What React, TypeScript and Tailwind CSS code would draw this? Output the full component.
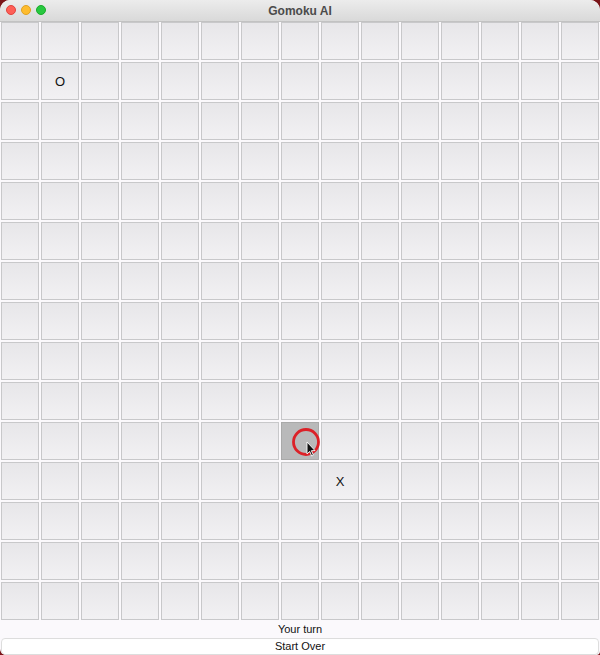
const SIZE = 15;

const marks: Record<string, string> = {
  "1-1": "O",
  "11-8": "X",
};

function Cell({ r, c }: { r: number; c: number }) {
  const mark = marks[`${r}-${c}`];
  const active = r === 10 && c === 7;
  return (
    <div
      className={
        active
          ? "relative w-[38px] h-[38px] border border-[#a9a9a9] bg-[#b9b9ba]"
          : "relative w-[38px] h-[38px] border border-[#c8c8ca] bg-gradient-to-b from-[#e7e6e9] to-[#f2f1f3] flex items-center justify-center"
      }
    >
      {mark && (
        <span className="text-[13px] text-[#111] leading-none">{mark}</span>
      )}
      {active && (
        <svg
          className="absolute left-[8px] top-[4px]"
          width="32"
          height="32"
          viewBox="0 0 32 32"
        >
          <circle cx="16" cy="15" r="12.5" fill="none" stroke="#dd1820" strokeWidth="2.8" opacity="0.95" />
          <path
            d="M17 15 L17 27 L19.7 24.4 L21.7 29 L23.4 28.2 L21.4 23.7 L25 23.6 Z"
            fill="#111"
            stroke="#fff"
            strokeWidth="0.9"
          />
        </svg>
      )}
    </div>
  );
}

export default function App() {
  return (
    <div className="w-[600px] h-[655px] bg-[#7a1418] overflow-hidden" style={{ fontFamily: "'Helvetica Neue', 'Liberation Sans', Arial, sans-serif" }}>
      <div className="w-full h-full bg-[#fbf9fc] rounded-t-[10px] rounded-bl-[6px] rounded-br-[4px] overflow-hidden flex flex-col">
        {/* Title bar */}
        <div className="relative h-[22px] shrink-0 bg-gradient-to-b from-[#ececec] to-[#d9d9d9] border-b border-[#c2c2c2] flex items-center justify-center">
          <div className="absolute left-[6px] top-[5px] flex gap-[5px]">
            <span className="w-[10px] h-[10px] rounded-full bg-[#fe5f57] border border-[#e0443e]" />
            <span className="w-[10px] h-[10px] rounded-full bg-[#febc2e] border border-[#dea123]" />
            <span className="w-[10px] h-[10px] rounded-full bg-[#28c840] border border-[#1aab29]" />
          </div>
          <span className="text-[12px] font-bold text-[#4b4b4b]">Gomoku AI</span>
        </div>

        {/* Board */}
        <div className="grid grid-cols-[repeat(15,38px)] gap-[2px] px-[1px]">
          {Array.from({ length: SIZE * SIZE }).map((_, i) => (
            <Cell key={i} r={Math.floor(i / SIZE)} c={i % SIZE} />
          ))}
        </div>

        {/* Status */}
        <div className="h-[18px] flex items-center justify-center text-[11px] text-[#111]">Your turn</div>
        <div className="px-[1px]">
          <button className="w-full h-[17px] rounded-[4px] bg-white border border-[#dddddd] text-[11px] text-[#111] flex items-center justify-center">
            Start Over
          </button>
        </div>
      </div>
    </div>
  );
}
